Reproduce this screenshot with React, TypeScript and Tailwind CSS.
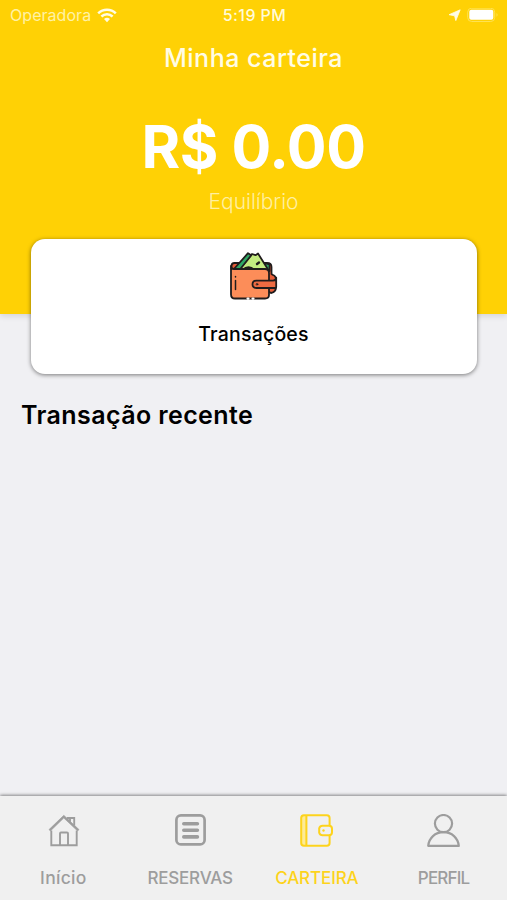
import type { ReactNode } from 'react'

interface TabProps {
  label: string
  labelClass?: string
  active?: boolean
  children: ReactNode
}

function Tab({ label, labelClass = '', active = false, children }: TabProps) {
  return (
    <button
      className={`flex flex-1 flex-col items-center pt-[16px] ${
        active ? 'text-[#fdd31c]' : 'text-[#9d9d9d]'
      }`}
    >
      <span className="flex h-9 items-center">{children}</span>
      <span
        className={`mt-[18px] whitespace-nowrap font-medium leading-6 ${labelClass}`}
      >
        {label}
      </span>
    </button>
  )
}

function StatusBar() {
  return (
    <div className="grid h-[30px] grid-cols-3 items-center pl-[10px] pr-[8px] text-[#fffbd9]">
      <div className="flex items-center gap-[6px]">
        <span className="text-[16px] leading-5 tracking-[0.05px] text-[#fff2a5]">
          Operadora
        </span>
        <svg width="20" height="15" viewBox="0 0 20 15" fill="none">
          <path
            d="M1.2 5.3a12.4 12.4 0 0 1 17.6 0M4.4 8.5a8 8 0 0 1 11.2 0"
            stroke="#fffce5"
            strokeWidth="2.5"
          />
          <path d="M7 11a4.5 4.5 0 0 1 6 0l-3 3.3z" fill="#fffce5" />
        </svg>
      </div>
      <span className="text-center text-[16px] font-medium leading-5 tracking-[0.4px]">
        5:19 PM
      </span>
      <div className="flex items-center justify-end gap-[6px]">
        <svg width="13" height="13" viewBox="0 0 13 13" fill="#fffce5">
          <path d="M12.2.8 7.8 11.6 6.6 6.8 1 5.7z" stroke="#fffce5" strokeWidth=".8" />
        </svg>
        <svg width="32" height="15" viewBox="0 0 32 15">
          <rect
            x=".7"
            y=".2"
            width="27"
            height="13.3"
            rx="4"
            fill="none"
            stroke="#ffe252"
          />
          <rect x="2.3" y="1.7" width="24" height="10" rx="2" fill="#fff" />
          <path d="M29.5 5c1.4.7 1.4 3 0 3.7z" fill="#ffe252" />
        </svg>
      </div>
    </div>
  )
}

function WalletIllustration() {
  return (
    <svg
      width="48"
      height="48"
      viewBox="0 0 48 48"
      stroke="#201c1c"
      strokeWidth="1.8"
      strokeLinejoin="round"
      strokeLinecap="round"
    >
      {/* back flap */}
      <path d="M1.5 17v-3q0-3 3-3H37q4.5 0 4.5 4v7l1.5 1q3 1 3 5v7q0 5-5 6z" fill="#e65d38" />
      {/* bank notes */}
      <path d="m34 11 5.5 1.5V19H36z" fill="#2fa765" />
      <path d="M9 18 22 2l3.5 1.2L28 1.5 39 19H9z" fill="#c3eb80" />
      <path d="M3.5 17.5 18 1.2l3.3 2L9.5 18z" fill="#2fa765" />
      <path d="M12.5 18q6-5.5 12 0" fill="#2fa765" />
      <path d="m27 12 2-1.5" strokeWidth="2.4" />
      {/* pocket */}
      <path
        d="M4 17h31q4 0 4 4v22q0 3.5-4 3.5H5q-4 0-4-4V14q0 3 3 3z"
        fill="#fc8d59"
      />
      <path d="M5.5 24.5v.5m0 3.5v9" strokeWidth="1.5" />
      <path d="M17.5 46.6h1m4 0h1" stroke="#fff" strokeWidth="2.2" />
      {/* clasp */}
      <path
        d="M26.5 28.6H43q3 0 3.2-3V35q0 1-1 1H26.5q-4 0-4-3.7t4-3.7z"
        fill="#ee6b42"
      />
      <circle cx="27" cy="32.3" r=".8" fill="#fc8d59" strokeWidth="1" />
    </svg>
  )
}

function HomeIcon() {
  return (
    <svg
      width="32"
      height="33"
      viewBox="0 0 32 33"
      fill="none"
      stroke="currentColor"
      strokeWidth="1.9"
      className="ml-[2px]"
    >
      <path d="M1 15.6 15.8 1.3 31 15.6l-1.4 1.4L15.8 4 2.4 17z" fill="currentColor" strokeWidth=".6" />
      <path d="M3.3 16.5v14.8h25.4V16.5M12 31V19.5q0-1 1-1h6q1 0 1 1V31M19.8 5.2V4h6.4v7.5M22 4.2v3.5" />
    </svg>
  )
}

function ListIcon() {
  return (
    <svg width="31" height="32" viewBox="0 0 31 32" fill="none" stroke="currentColor" className="ml-[1px]">
      <rect x="1.4" y="1.4" width="28.2" height="29" rx="4.5" strokeWidth="2.7" />
      <path d="M8.8 9.7h13.6M8.8 16.3h13.6M8.8 22.9h13.6" strokeWidth="3.6" strokeLinecap="round" />
    </svg>
  )
}

function WalletIcon() {
  return (
    <svg
      width="33"
      height="33"
      viewBox="0 0 33 33"
      fill="none"
      stroke="currentColor"
      strokeWidth="2"
    >
      <path d="M3 1h3v31H3Q1 31 1 29V4Q1 1 3 1z" fill="#fdeb96" stroke="none" />
      <path d="M29.6 11.5V4q0-2.8-2.8-2.8H4Q1.2 1.2 1.2 4v25q0 2.8 2.8 2.8h22.8q2.8 0 2.8-2.8v-7.5M6.4 1.2v30.6" />
      <path d="M22.5 11.7H29q3 0 3 3v3.6q0 3-3 3h-6.5q-2.5 0-3.3-2.5v-4.6q.8-2.5 3.3-2.5z" />
      <circle cx="23.5" cy="16.5" r="1.2" fill="currentColor" stroke="none" />
    </svg>
  )
}

function ProfileIcon() {
  return (
    <svg
      width="33"
      height="33"
      viewBox="0 0 33 33"
      fill="none"
      stroke="currentColor"
      strokeWidth="2.2"
      strokeLinejoin="round"
    >
      <circle cx="16.5" cy="9.6" r="8.6" />
      <path d="M1.2 31.8C2 24 8 18.2 16.5 18.2S31 24 31.8 31.8z" />
    </svg>
  )
}

export default function App() {
  return (
    <div className="flex h-[900px] w-full flex-col overflow-hidden bg-[#f0f0f3] font-['Inter','Liberation_Sans',sans-serif]">
      <header className="flex h-[314px] flex-col bg-[#ffd105] text-center text-white shadow-[0_2px_6px_rgba(0,0,0,0.12)]">
        <StatusBar />
        <h1 className="mt-[13px] text-[25px] font-medium leading-[30px] tracking-[0.5px] text-[#fffce5]">
          Minha carteira
        </h1>
        <p className="mt-[39px] text-[59px] font-bold leading-[70px] tracking-[-0.4px]">
          R$ 0.00
        </p>
        <p className="mt-[8px] text-[21px] font-light leading-6 text-[#ffefa0]">
          Equilíbrio
        </p>
      </header>

      <main className="flex-1">
        <section className="relative mx-auto -mt-[75px] flex h-[135px] w-[446px] flex-col items-center rounded-[14px] bg-white pt-[13px] shadow-[0_1px_4px_rgba(0,0,0,0.5)]">
          <WalletIllustration />
          <span className="mt-[22px] text-[19.5px] font-medium leading-6 tracking-[0.2px] text-black">
            Transações
          </span>
        </section>
        <h2 className="ml-[21px] mt-[26px] text-[25px] font-semibold leading-[30px] tracking-[0.4px] text-black">
          Transação recente
        </h2>
      </main>

      <nav className="flex h-[104px] bg-[#f0f0f0] shadow-[0_-1px_3px_rgba(0,0,0,0.45)]">
        <Tab label="Início" labelClass="text-[17.5px] tracking-[0.3px]">
          <HomeIcon />
        </Tab>
        <Tab label="RESERVAS" labelClass="text-[17px] tracking-[-0.2px]">
          <ListIcon />
        </Tab>
        <Tab label="CARTEIRA" active labelClass="text-[17px] tracking-[-0.1px]">
          <WalletIcon />
        </Tab>
        <Tab label="PERFIL" labelClass="text-[17px] tracking-[-0.8px]">
          <ProfileIcon />
        </Tab>
      </nav>
    </div>
  )
}
